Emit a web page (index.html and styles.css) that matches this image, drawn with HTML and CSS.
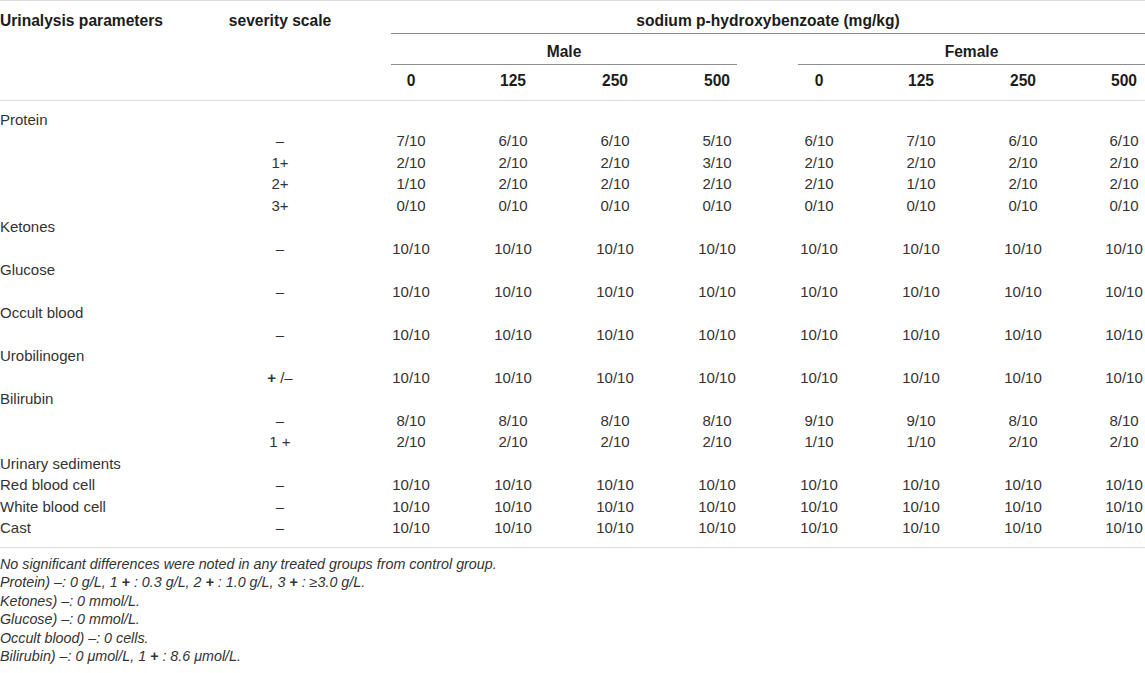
FILE: index.html
```html
<!DOCTYPE html>
<html lang="en">
  <head>
    <meta charset="UTF-8" />
    <meta name="viewport" content="width=device-width, initial-scale=1.0" />
    <title>Urinalysis findings</title>
    <link rel="stylesheet" href="styles.css">
  </head>
  <body>
    <table class="data">
      <colgroup>
        <col class="c-param" />
        <col class="c-scale" />
        <col class="c-num" /><col class="c-num" /><col class="c-num" /><col class="c-num" />
        <col class="c-num" /><col class="c-num" /><col class="c-num" /><col class="c-last" />
      </colgroup>
      <thead>
        <tr class="h1">
          <th rowspan="3" class="left">Urinalysis parameters</th>
          <th rowspan="3">severity scale</th>
          <th colspan="8"><div class="rule rule-all">sodium p-hydroxybenzoate (mg/kg)</div></th>
        </tr>
        <tr class="h2">
          <th colspan="4"><div class="rule rule-male">Male</div></th>
          <th colspan="4"><div class="rule rule-female">Female</div></th>
        </tr>
        <tr class="h3">
          <th>0</th><th>125</th><th>250</th><th>500</th>
          <th>0</th><th>125</th><th>250</th><th class="last">500</th>
        </tr>
      </thead>
      <tbody>
        <tr class="first"><td colspan="10">Protein</td></tr>
        <tr><td></td><td class="sc">–</td>
          <td>7/10</td><td>6/10</td><td>6/10</td><td>5/10</td>
          <td>6/10</td><td>7/10</td><td>6/10</td><td class="last">6/10</td></tr>
        <tr><td></td><td class="sc">1+</td>
          <td>2/10</td><td>2/10</td><td>2/10</td><td>3/10</td>
          <td>2/10</td><td>2/10</td><td>2/10</td><td class="last">2/10</td></tr>
        <tr><td></td><td class="sc">2+</td>
          <td>1/10</td><td>2/10</td><td>2/10</td><td>2/10</td>
          <td>2/10</td><td>1/10</td><td>2/10</td><td class="last">2/10</td></tr>
        <tr><td></td><td class="sc">3+</td>
          <td>0/10</td><td>0/10</td><td>0/10</td><td>0/10</td>
          <td>0/10</td><td>0/10</td><td>0/10</td><td class="last">0/10</td></tr>

        <tr><td colspan="10">Ketones</td></tr>
        <tr><td></td><td class="sc">–</td>
          <td>10/10</td><td>10/10</td><td>10/10</td><td>10/10</td>
          <td>10/10</td><td>10/10</td><td>10/10</td><td class="last">10/10</td></tr>

        <tr><td colspan="10">Glucose</td></tr>
        <tr><td></td><td class="sc">–</td>
          <td>10/10</td><td>10/10</td><td>10/10</td><td>10/10</td>
          <td>10/10</td><td>10/10</td><td>10/10</td><td class="last">10/10</td></tr>

        <tr><td colspan="10">Occult blood</td></tr>
        <tr><td></td><td class="sc">–</td>
          <td>10/10</td><td>10/10</td><td>10/10</td><td>10/10</td>
          <td>10/10</td><td>10/10</td><td>10/10</td><td class="last">10/10</td></tr>

        <tr><td colspan="10">Urobilinogen</td></tr>
        <tr><td></td><td class="sc"><b>+</b> /–</td>
          <td>10/10</td><td>10/10</td><td>10/10</td><td>10/10</td>
          <td>10/10</td><td>10/10</td><td>10/10</td><td class="last">10/10</td></tr>

        <tr><td colspan="10">Bilirubin</td></tr>
        <tr><td></td><td class="sc">–</td>
          <td>8/10</td><td>8/10</td><td>8/10</td><td>8/10</td>
          <td>9/10</td><td>9/10</td><td>8/10</td><td class="last">8/10</td></tr>
        <tr><td></td><td class="sc">1 +</td>
          <td>2/10</td><td>2/10</td><td>2/10</td><td>2/10</td>
          <td>1/10</td><td>1/10</td><td>2/10</td><td class="last">2/10</td></tr>

        <tr><td colspan="10">Urinary sediments</td></tr>
        <tr><td>Red blood cell</td><td class="sc">–</td>
          <td>10/10</td><td>10/10</td><td>10/10</td><td>10/10</td>
          <td>10/10</td><td>10/10</td><td>10/10</td><td class="last">10/10</td></tr>
        <tr><td>White blood cell</td><td class="sc">–</td>
          <td>10/10</td><td>10/10</td><td>10/10</td><td>10/10</td>
          <td>10/10</td><td>10/10</td><td>10/10</td><td class="last">10/10</td></tr>
        <tr class="end"><td>Cast</td><td class="sc">–</td>
          <td>10/10</td><td>10/10</td><td>10/10</td><td>10/10</td>
          <td>10/10</td><td>10/10</td><td>10/10</td><td class="last">10/10</td></tr>
      </tbody>
    </table>

    <div class="notes">
      <p>No significant differences were noted in any treated groups from control group.</p>
      <p>Protein) –: 0 g/L, 1 <b>+</b> : 0.3 g/L, 2 <b>+</b> : 1.0 g/L, 3 <b>+</b> : ≥3.0 g/L.</p>
      <p>Ketones) –: 0 mmol/L.</p>
      <p>Glucose) –: 0 mmol/L.</p>
      <p>Occult blood) –: 0 cells.</p>
      <p>Bilirubin) –: 0 μmol/L, 1 <b>+</b> : 8.6 μmol/L.</p>
    </div>
  </body>
</html>
```

FILE: styles.css
```css
body {
  font-family: 'Liberation Sans', Arial, sans-serif;
  margin: 0;
  padding: 0;
  background: #fff;
  color: #333;
}
.data {
  width: 1145px;
  table-layout: fixed;
  border-collapse: collapse;
  font-size: 15px;
  line-height: 21.5px;
  border-top: 1px solid #dcdcdc;
  border-bottom: 1px solid #dcdcdc;
}
.data thead {
  border-bottom: 1px solid #dcdcdc;
}
.c-param {
  width: 200px;
}
.c-scale {
  width: 160px;
}
.c-num {
  width: 102px;
}
.c-last {
  width: 71px;
}
th,
td {
  padding: 0;
  text-align: center;
  white-space: nowrap;
}
th {
  font-size: 15.6px;
  font-weight: bold;
  color: #1c1c1c;
  vertical-align: top;
}
th.left,
td:first-child {
  text-align: left;
}
.last {
  padding-left: 29px;
}
.h1 th {
  padding-top: 9px;
}
.h2 th {
  padding-top: 7px;
}
.h3 th {
  padding-top: 5px;
  padding-bottom: 8px;
}
.h3 th.last {
  padding-left: 29px;
}
.rule {
  padding-bottom: 1.5px;
  border-bottom: 1px solid #8c8c8c;
}
.rule-all {
  margin-left: 31px;
}
.rule-male {
  margin: 0 31px;
}
.rule-female {
  margin-left: 30px;
}
.first td {
  padding-top: 8px;
}
.end td {
  padding-bottom: 8px;
}
.sc b,
.notes b {
  font-weight: bold;
}
.notes {
  padding-top: 7px;
  font-size: 14.3px;
  font-style: italic;
  line-height: 18.6px;
  color: #333;
}
.notes p {
  margin: 0;
}
```
